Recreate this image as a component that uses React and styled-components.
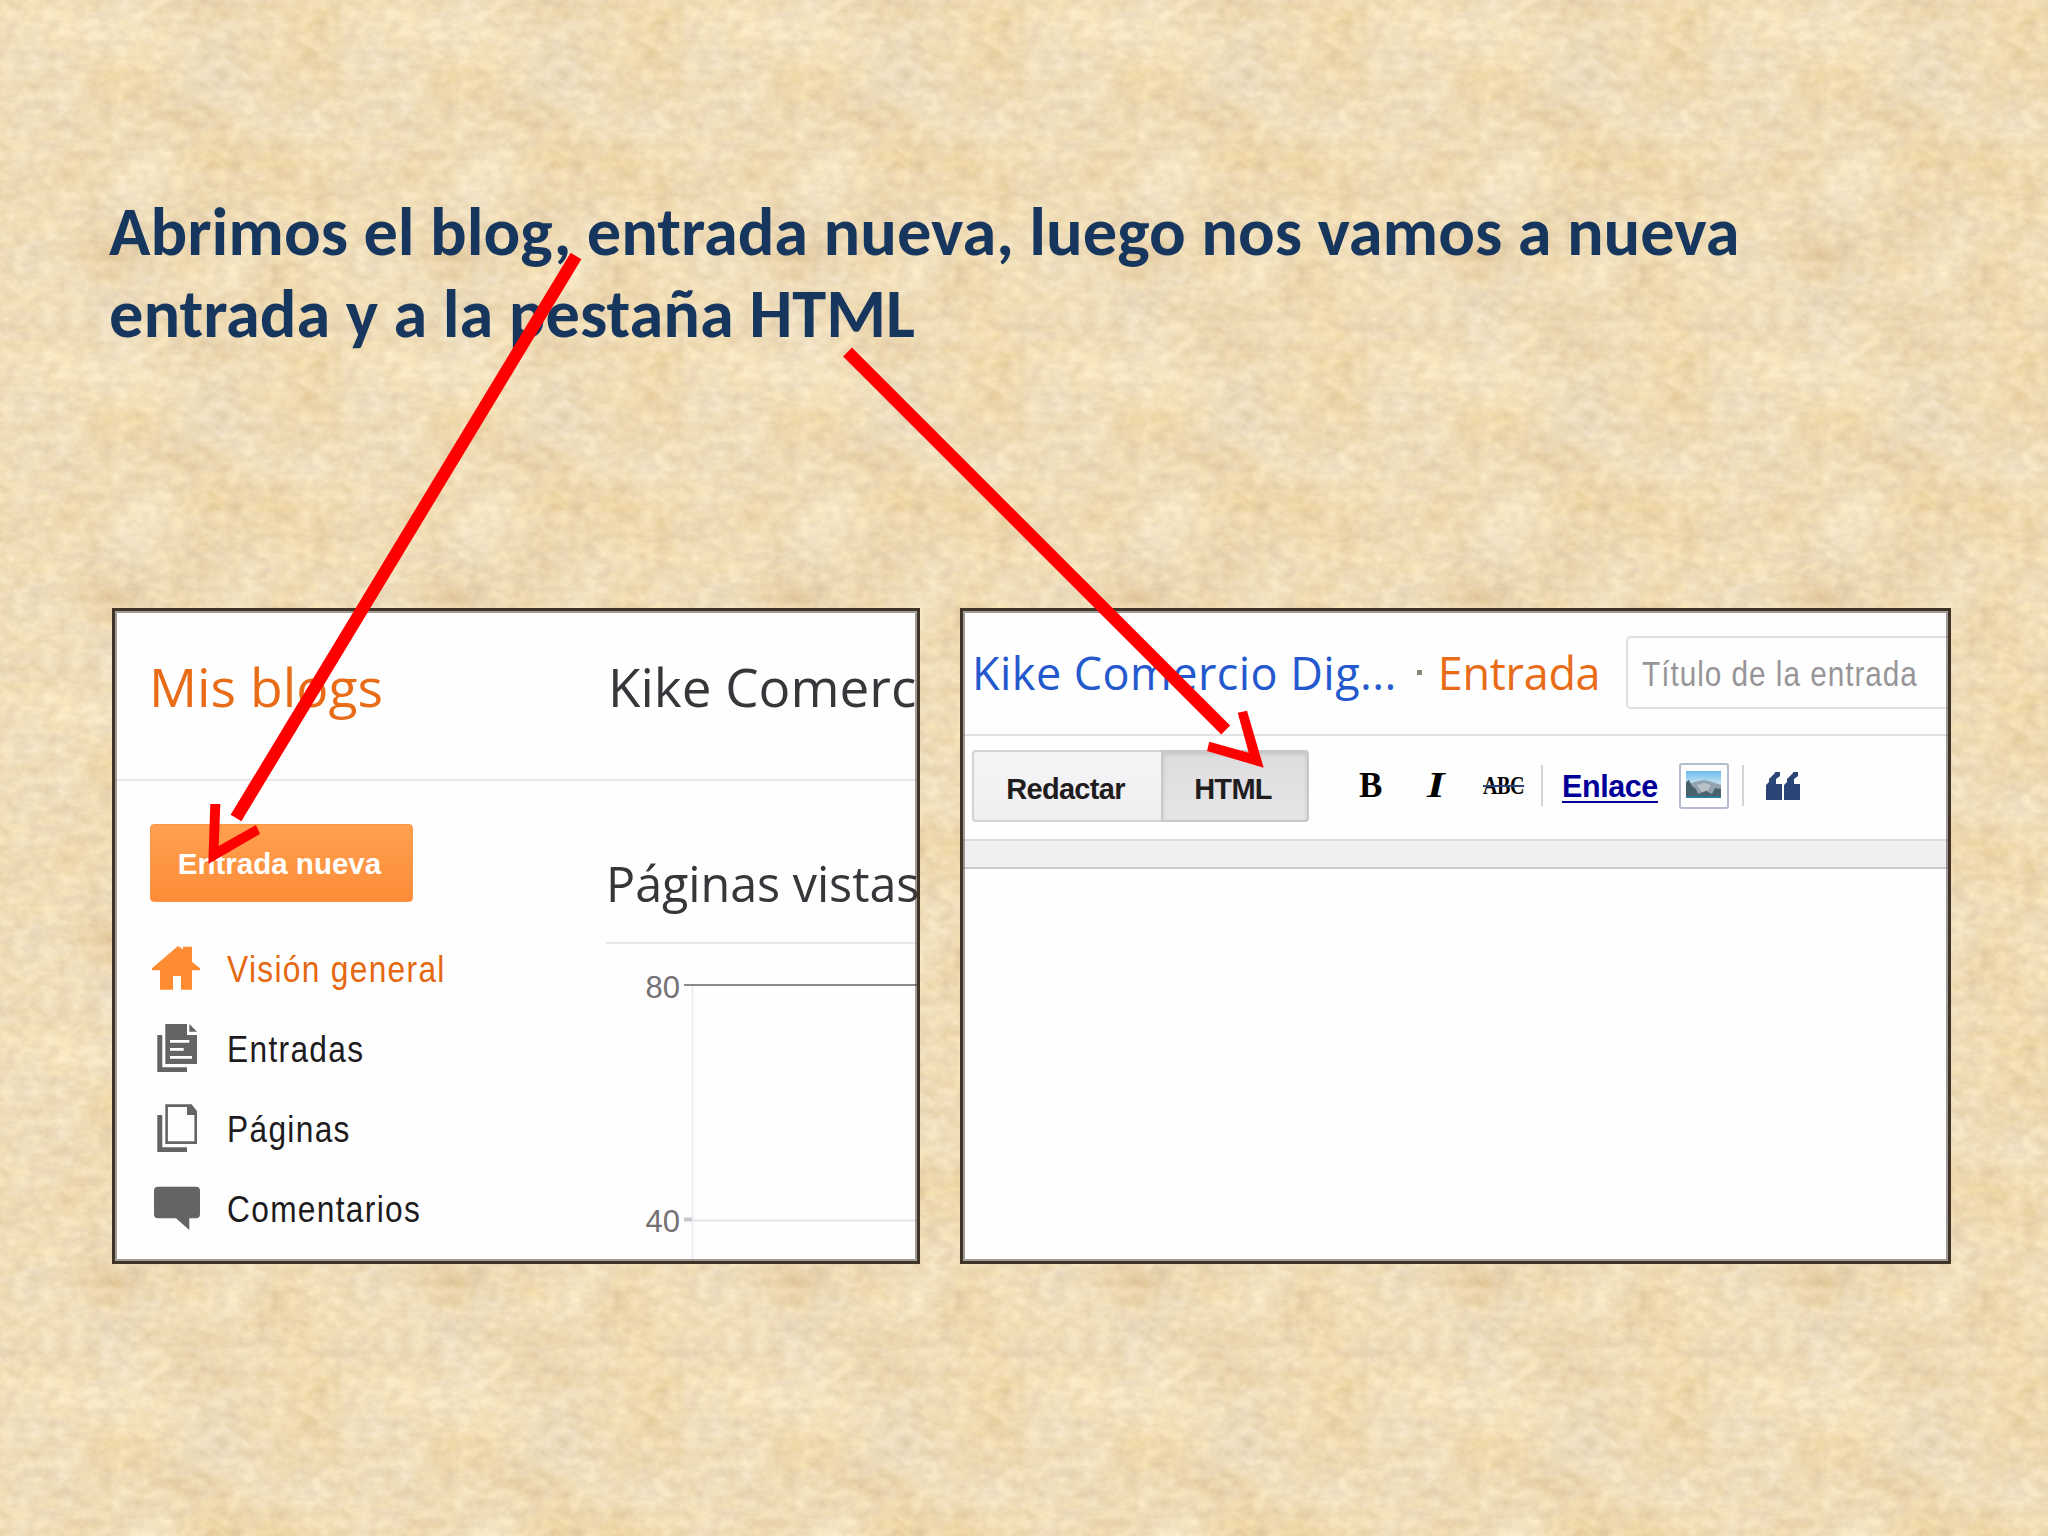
import React from 'react';
import styled, { createGlobalStyle } from 'styled-components';

const GlobalStyle = createGlobalStyle`
  body {
    margin: 0;
    background: #efddb8;
    font-family: "Liberation Sans", Arial, sans-serif;
  }
`;

const Slide = styled.main`
  position: relative;
  isolation: isolate;
  box-sizing: border-box;
  width: 2048px;
  height: 1536px;
  padding: 191px 97px 0 109px;
  overflow: hidden;
`;

const Overlay = styled.svg`
  position: absolute;
  inset: 0;
  width: 2048px;
  height: 1536px;
  pointer-events: none;
  z-index: ${(p) => (p.$behind ? -1 : 1)};
`;

const Title = styled.h1`
  margin: 0;
  height: 417px;
  color: #17365d;
  font: bold 68.4px/82px Carlito, Calibri, Lato, sans-serif;
  white-space: nowrap;
`;

const Panels = styled.div`
  display: flex;
  gap: 40px;
  margin-left: 3px;
`;

const Panel = styled.section`
  position: relative;
  box-sizing: border-box;
  width: ${(p) => p.$width};
  height: 656px;
  border: 3px solid #3f3427;
  background: #fefefe;
  overflow: hidden;

  &::after {
    content: '';
    position: absolute;
    inset: 0;
    border: 2px solid rgba(70, 55, 45, 0.5);
    pointer-events: none;
  }
`;

const BlogHeader = styled.header`
  display: grid;
  grid-template-columns: 459px 1fr;
  box-sizing: border-box;
  height: 170px;
  padding: 46px 0 0 34px;
  border-bottom: 2px solid #e9e7ea;
`;

const Heading = styled.span`
  color: ${(p) => p.$color || '#38363a'};
  font-family: "Open Sans", sans-serif;
  font-size: ${(p) => p.$size}px;
  line-height: 60px;
  letter-spacing: ${(p) => p.$spacing || 0}px;
  white-space: nowrap;
`;

const BlogBody = styled.div`
  display: grid;
  grid-template-columns: 456px 1fr;
  padding-left: 35px;
`;

const Sidebar = styled.nav`
  padding-top: 43px;
`;

const NewPostButton = styled.button`
  display: block;
  width: 263px;
  height: 78px;
  margin: 0 0 27px;
  padding: 2px 4px 0 0;
  border: 1px solid #fb9748;
  border-radius: 4px;
  background: linear-gradient(#ffa04f, #fd8c38);
  color: #fff;
  font: bold 29.5px "Liberation Sans", Arial, sans-serif;
`;

const MenuItem = styled.a`
  display: flex;
  align-items: center;
  gap: 27px;
  height: 80px;
  color: ${(p) => (p.$active ? '#e5670f' : '#1d1b1d')};
`;

const MenuIcon = styled.svg`
  flex: none;
  width: 50px;
  height: 80px;
  fill: ${(p) => p.$color || '#656465'};
`;

const NarrowText = styled.span`
  display: inline-block;
  padding-top: ${(p) => p.$drop || 0};
  font-size: ${(p) => p.$size};
  letter-spacing: ${(p) => p.$spacing};
  white-space: nowrap;
  transform: scaleX(${(p) => p.$scale});
  transform-origin: left;
`;

const Stats = styled.div`
  padding-top: 72px;
`;

const StatsTitle = styled.div`
  height: 89px;
  border-bottom: 2px solid #e9e7ea;
`;

const Chart = styled.svg`
  display: block;
  width: 311px;
  height: 317px;
  font: 31px "Liberation Sans", Arial, sans-serif;
`;

const PostHeader = styled.header`
  display: flex;
  align-items: center;
  box-sizing: border-box;
  height: 125px;
  padding-left: 9px;
  border-bottom: 2px solid #e2e0e3;
`;

const Dot = styled.span`
  width: 5px;
  height: 5px;
  margin: 0 16px 0 20px;
  background: #8a8577;
`;

const TitleInput = styled.div`
  box-sizing: border-box;
  width: 322px;
  height: 73px;
  margin-left: auto;
  padding-left: 14px;
  border: 2px solid #e1dfe3;
  border-right: 0;
  border-radius: 5px 0 0 5px;
  color: #979597;
  line-height: 71px;
`;

const Toolbar = styled.div`
  display: flex;
  align-items: center;
  box-sizing: border-box;
  height: 103px;
  padding: 0 0 4px 9px;
`;

const ModeButton = styled.button`
  box-sizing: border-box;
  width: ${(p) => p.$width};
  height: 72px;
  padding: 8px 4px 0 0;
  border: 2px solid ${(p) => (p.$active ? '#c9c7ca' : '#d3d1d4')};
  border-right-width: ${(p) => (p.$active ? '2px' : '0')};
  border-radius: ${(p) => (p.$active ? '0 4px 4px 0' : '4px 0 0 4px')};
  background: ${(p) => (p.$active ? 'linear-gradient(#dddcde, #e6e5e7)' : 'linear-gradient(#f6f5f6, #f0eef1)')};
  box-shadow: ${(p) => (p.$active ? 'inset 0 2px 5px rgba(0, 0, 0, 0.12)' : 'none')};
  color: #1f1d20;
  font: bold 29px "Liberation Sans", Arial, sans-serif;
  letter-spacing: -0.7px;
`;

const Tool = styled.span`
  width: ${(p) => p.$width};
  margin-left: ${(p) => p.$gap};
  color: #000;
  font-family: "Liberation Serif", "Times New Roman", serif;
  font-weight: bold;
  font-size: 35px;
  line-height: 40px;
`;

const ItalicTool = styled(Tool)`
  font-style: italic;
  transform: scaleX(1.3);
  transform-origin: left;
`;

const StrikeTool = styled(Tool)`
  font-size: 26px;
  letter-spacing: -0.5px;
  text-decoration: line-through 2px #2b4676;
  transform: scaleX(0.77);
  transform-origin: left;
`;

const LinkTool = styled.a`
  margin-left: 19px;
  width: 97px;
  color: #000099;
  font-weight: bold;
  font-size: 30.5px;
  line-height: 40px;
  letter-spacing: -0.4px;
  text-decoration: underline 2px;
  text-underline-offset: 4px;
`;

const Separator = styled.span`
  width: 2px;
  height: 41px;
  margin-left: ${(p) => p.$gap};
  background: #d5d3d8;
`;

const ToolIcon = styled.svg`
  flex: none;
  margin-left: ${(p) => p.$gap};
`;

const Strip = styled.div`
  box-sizing: border-box;
  height: 30px;
  border-top: 2px solid #dfdde0;
  border-bottom: 2px solid #cbc9cc;
  background: #f2eff3;
`;

const Parchment = () => (
  <Overlay $behind aria-hidden="true">
    <defs>
      <filter id="paper" x="0" y="0" width="342" height="342" filterUnits="userSpaceOnUse" colorInterpolationFilters="sRGB">
        <feTurbulence type="fractalNoise" baseFrequency="0.0117 0.0146" numOctaves="3" seed="8" stitchTiles="stitch" result="blotch" />
        <feColorMatrix
          in="blotch"
          values="0.08 0 0 0 0.897  0.1 0.06 0 0 0.784  0.1 0.16 0 0 0.59  0 0 0 0 1"
          result="base"
        />
        <feTurbulence type="fractalNoise" baseFrequency="0.07 0.1" numOctaves="4" seed="3" stitchTiles="stitch" result="grain" />
        <feColorMatrix
          in="grain"
          values="0.11 0 0 0 0.445  0.13 0 0 0 0.433  0.13 0.06 0 0 0.4  0 0 0 0 1"
          result="fiber"
        />
        <feComposite in="base" in2="fiber" operator="arithmetic" k1="0" k2="1" k3="1" k4="-0.5" />
      </filter>
      <pattern id="tile" width="342" height="342" patternUnits="userSpaceOnUse">
        <rect width="342" height="342" filter="url(#paper)" />
      </pattern>
    </defs>
    <rect width="2048" height="1536" fill="url(#tile)" />
  </Overlay>
);

const Arrows = () => (
  <Overlay aria-hidden="true">
    <g stroke="#f00" strokeWidth="12.5">
      <line x1="576" y1="256" x2="236" y2="818" />
      <line x1="847.5" y1="352" x2="1225.7" y2="730" />
    </g>
    <g fill="#f00">
      <path d="M210.3 804h10l-1.6 42L256 825l4 9-51.7 30z" />
      <path d="M1237.7 712.7l9.3-2 16.7 57L1207 751l2.3-9.3 39.4 11z" />
    </g>
  </Overlay>
);

const icons = {
  home: <path d="M28 17l5 3.5V17.7h9v15l8 6.6v2h-8v19.4H31V47h-8v13.7H10V41.3H2v-2z" />,
  posts: (
    <>
      <path d="M7.3 26h5v32.3H37V63H7.3z" />
      <path d="M15.3 15H37v11h10v29H15.3z" />
      <path d="M39.3 15l7.7 7.7h-7.7z" />
      <path fill="#fefefe" d="M20 31h19.3v2.7H20zM20 39h13.7v2.7H20zM20 47h22v2.7H20z" />
    </>
  ),
  pages: (
    <>
      <path d="M7.3 26h5v32.3H37V63H7.3z" />
      <path fill="none" stroke="#656465" strokeWidth="2.6" d="M16.6 16.6H41l4.7 6v31H16.6z" />
      <path d="M37 16h4.5l5.5 7v3H37z" />
    </>
  ),
  comments: <path d="M8 17.7h38a4 4 0 0 1 4 4v23.6a4 4 0 0 1-4 4h-6.7V61L26 49.3H8a4 4 0 0 1-4-4V21.7a4 4 0 0 1 4-4z" />,
};

const menu = [
  { icon: 'home', label: 'Visión general', active: true },
  { icon: 'posts', label: 'Entradas' },
  { icon: 'pages', label: 'Páginas' },
  { icon: 'comments', label: 'Comentarios' },
];

const VisitsChart = () => (
  <Chart>
    <path stroke="#efedf1" strokeWidth="2" d="M86.5 42v275" />
    <path stroke="#8b898c" strokeWidth="2" d="M78 41h233" />
    <path stroke="#e5e3e7" strokeWidth="2" d="M86 276.5h225" />
    <path stroke="#c9c7cb" strokeWidth="4" d="M78 275.5h8" />
    <g fill="#737173">
      <text x="39.5" y="53.5">80</text>
      <text x="39.5" y="288">40</text>
    </g>
  </Chart>
);

const BlogPanel = () => (
  <Panel $width="808px">
    <BlogHeader>
      <Heading $size={53.5} $spacing={0} $color="#e86c17">Mis blogs</Heading>
      <Heading $size={53} $spacing={0}>Kike Comerc</Heading>
    </BlogHeader>
    <BlogBody>
      <Sidebar>
        <NewPostButton>Entrada nueva</NewPostButton>
        {menu.map((item) => (
          <MenuItem key={item.label} $active={item.active}>
            <MenuIcon $color={item.active && '#ff8b33'}>{icons[item.icon]}</MenuIcon>
            <NarrowText $size="36px" $spacing="1.5px" $scale={0.88} $drop="2px">{item.label}</NarrowText>
          </MenuItem>
        ))}
      </Sidebar>
      <Stats>
        <StatsTitle>
          <Heading $size={48.5} $spacing={-0.05}>Páginas vistas</Heading>
        </StatsTitle>
        <VisitsChart />
      </Stats>
    </BlogBody>
  </Panel>
);

const EditorPanel = () => (
  <Panel $width="991px">
    <PostHeader>
      <Heading $size={45} $spacing={0.45} $color="#2459ce">Kike Comercio Dig...</Heading>
      <Dot />
      <Heading $size={45} $spacing={-0.3} $color="#e86c17">Entrada</Heading>
      <TitleInput>
        <NarrowText $size="35px" $spacing="1.15px" $scale={0.85}>Título de la entrada</NarrowText>
      </TitleInput>
    </PostHeader>
    <Toolbar>
      <ModeButton $width="189px">Redactar</ModeButton>
      <ModeButton $width="148px" $active>HTML</ModeButton>
      <Tool $gap="50px" $width="23px">B</Tool>
      <ItalicTool $gap="45px" $width="22px">I</ItalicTool>
      <StrikeTool $gap="34px" $width="41px">ABC</StrikeTool>
      <Separator $gap="17px" />
      <LinkTool>Enlace</LinkTool>
      <ToolIcon $gap="20px" width="50" height="46" viewBox="0 0 50 46">
        <defs>
          <linearGradient id="sky" x1="0" y1="0" x2="0" y2="1">
            <stop offset="0" stopColor="#6cbcf0" />
            <stop offset="0.45" stopColor="#bfe0f0" />
            <stop offset="1" stopColor="#7d8d98" />
          </linearGradient>
        </defs>
        <rect x="1" y="1" width="48" height="44" rx="2" fill="#fff" stroke="#b4bccd" strokeWidth="2" />
        <path fill="url(#sky)" d="M7 8h35v27H7z" />
        <path fill="#93a2ae" d="M7 22l8-3 10-2 8 2 9 3v10H7z" />
        <path fill="#48626a" d="M7 19l3-2 3 6 4 3 2 5 8-3 6 3 3-6 6 1v7H7z" />
        <path fill="#b9c2c8" d="M18 22l7-2 7 2-3 5-6 2z" />
        <path fill="#2c7ba0" d="M7 33h35v2H7z" />
      </ToolIcon>
      <Separator $gap="13px" />
      <ToolIcon $gap="22px" width="35" height="28" viewBox="0 0 35 28" fill="#2b4676">
        <path d="M0 28V13l3-3V7l6-6V0h5v4l-4 3v5h6v16z" />
        <path d="M18 28V13l3-3V7l6-6V0h5v4l-4 3v5h6v16z" />
      </ToolIcon>
    </Toolbar>
    <Strip />
  </Panel>
);

export default function App() {
  return (
    <Slide>
      <GlobalStyle />
      <Parchment />
      <Title>
        Abrimos el blog, entrada nueva, luego nos vamos a nueva
        <br />
        entrada y a la pestaña HTML
      </Title>
      <Panels>
        <BlogPanel />
        <EditorPanel />
      </Panels>
      <Arrows />
    </Slide>
  );
}
